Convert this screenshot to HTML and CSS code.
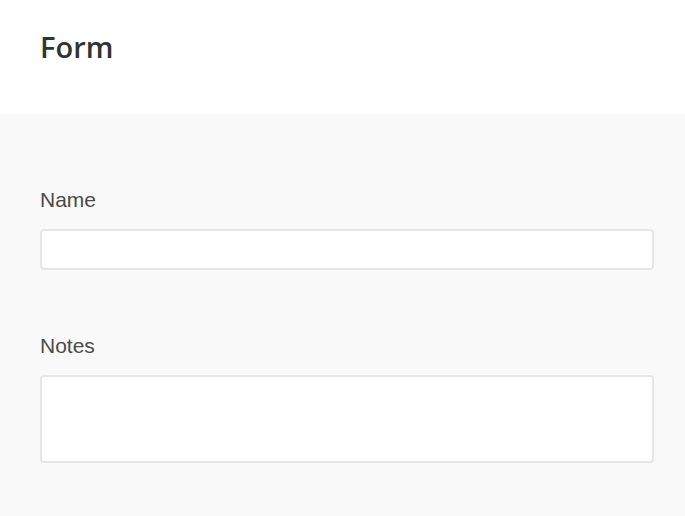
FILE: index.html
```html
<!DOCTYPE html>
<html lang="en">
<head>
<meta charset="utf-8">
<title>Form</title>
<link rel="stylesheet" href="styles.css">
</head>
<body>
<header class="page-header">
  <h1 class="page-title">Form</h1>
</header>
<main class="form-area">
  <div class="field">
    <label class="field-label" for="name">Name</label>
    <input class="field-input" id="name" type="text">
  </div>
  <div class="field">
    <label class="field-label" for="notes">Notes</label>
    <textarea class="field-input field-textarea" id="notes"></textarea>
  </div>
</main>
</body>
</html>
```

FILE: styles.css
```css
html, body {
  margin: 0;
  padding: 0;
  height: 100%;
}
body {
  display: flex;
  flex-direction: column;
  background: #f9f9f9;
  font-family: "Liberation Sans", Arial, sans-serif;
}
.page-header {
  background: #ffffff;
  height: 114px;
  box-sizing: border-box;
  padding: 0 40px;
}
.page-title {
  margin: 0;
  padding-top: 30px;
  font-family: "Open Sans", Lato, sans-serif;
  font-weight: 600;
  font-size: 29px;
  line-height: 34px;
  color: #333333;
}
.form-area {
  flex: 1;
  display: flex;
  flex-direction: column;
  gap: 64px;
  padding: 74px 31px 0 40px;
}
.field {
  display: flex;
  flex-direction: column;
  gap: 17px;
}
.field-label {
  font-size: 21px;
  line-height: 24px;
  color: #4a4a4a;
}
.field-input {
  display: block;
  box-sizing: border-box;
  width: 100%;
  height: 41px;
  margin: 0;
  border: 2px solid #e6e6e6;
  border-radius: 4px;
  background: #ffffff;
  font: inherit;
  outline: none;
  resize: none;
}
.field-textarea {
  height: 88px;
}
```
